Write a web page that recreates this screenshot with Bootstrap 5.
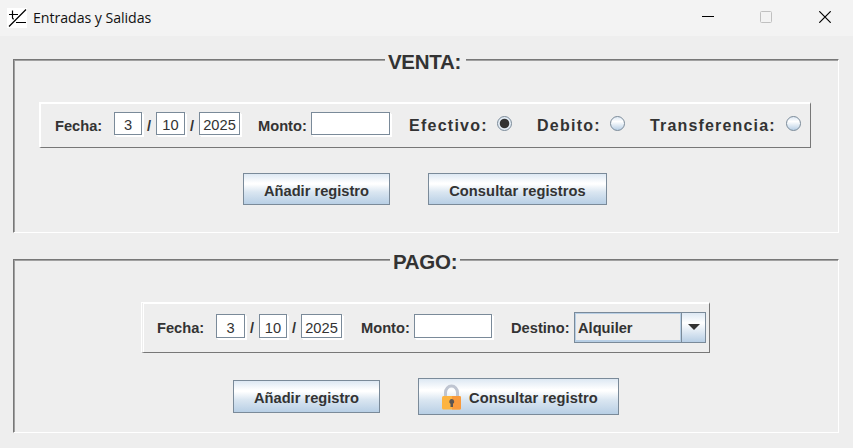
<!DOCTYPE html>
<html lang="es">
<head>
<meta charset="utf-8">
<meta name="viewport" content="width=device-width, initial-scale=1">
<title>Entradas y Salidas</title>
<link href="https://cdn.jsdelivr.net/npm/bootstrap@5.3.0/dist/css/bootstrap.min.css" rel="stylesheet">
<style>
body{background:#eee;color:#333;font:bold 14.67px/20px "Liberation Sans",Arial,sans-serif;height:448px;overflow:hidden}
.titlebar{height:36px;background:#f3f3f3;color:#111;padding:0 22px 0 7px}
.titlebar h1{font:14.2px/20px "Open Sans","Segoe UI",sans-serif;letter-spacing:-.06px;margin:0 0 0 6px;width:120px}
.titlebar svg{display:block;flex:none}
.group{width:826px;height:174px;margin:0 0 26px 13px;border:1px solid #fff;border-top-color:#777;border-left-color:#777;box-shadow:inset 1px 1px 0 #a0a0a0;padding:1px 0 0 1px}
.group>legend{float:none;font-size:20.5px;letter-spacing:-.3px;line-height:24px;height:24px;background:#eee;margin:-11px 0 0;font-weight:bold;white-space:nowrap;padding:0 0 0 3px}
.strip{border:2px solid #fff;border-right:1px solid #777;border-bottom:1px solid #777}
.strip-sale{width:772px;height:46px;margin:28px 0 0 24px}
.strip-pay{width:569px;height:51px;margin:28px 0 0 126px;border-left:3px double #fff}
.lbl{white-space:nowrap;flex:none}
.slash{width:14px;padding-left:5px}
.wide{font-size:16px;letter-spacing:1.25px}
.field{flex:none;height:23px;margin-bottom:5px;padding:3px 0 0;border:1px solid #7a8a99;border-radius:0;background:#fff;box-shadow:1px 1px 0 #fff,2px 2px 0 #fff;font:14.67px/18px "Liberation Sans",Arial,sans-serif;color:#333;text-align:center}
.strip-pay .field{height:24px;margin-bottom:4px}
.dot{flex:none;width:15px;height:15px;margin:0 0 4px;border:1.5px solid #7a8a99;border-radius:50%;appearance:none;background:linear-gradient(#dde8f3 0,#fff 35%,#b8cfe5)}
.dot:checked{background:radial-gradient(circle,#333 0 4.3px,#e4edf6 5.2px)}
.metal{border:1px solid #7a8a99;border-radius:0;background:linear-gradient(#dde8f3 0,#fff 30%,#fff 34%,#dae6f1 60%,#b8cfe5);color:#333;font:bold 14.67px/20px "Liberation Sans",Arial,sans-serif;padding:3px 0 0;height:32px;white-space:nowrap;text-align:center}
.metal:hover{background:linear-gradient(#dde8f3,#fff 34%,#b8cfe5);color:#333}
.combo{flex:none;width:132px;height:31px;margin-bottom:2px;border:1px solid #7a8a99}
.combo-value{width:107px;border:1px solid #b8cfe5;border-bottom-width:2px;padding:2px 0 0 2px}
.combo-arrow{width:24px;border-left:1px solid #7a8a99;background:linear-gradient(#dde8f3,#fff 34%,#b8cfe5)}
</style>
</head>
<body>
<header class="titlebar d-flex align-items-center">
  <svg width="20" height="20" viewBox="0 0 20 20"><path fill="#fff" d="M0 0h20v20H0z"/><path d="M2 18.500 19 1.500M2 6.500h9M5.500 2.500V10q0 1 1.500 1M9 14.500h10" fill="none" stroke="#000" stroke-width="1.2"/></svg>
  <h1 class="text-nowrap">Entradas y Salidas</h1>
  <div class="d-flex ms-auto align-items-center" style="padding-bottom:2px">
    <svg width="12" height="12" style="margin-right:46px"><path d="M0 5.500h12" stroke="#000"/></svg>
    <svg width="12" height="12" style="margin-right:47px"><rect x=".5" y=".5" width="11" height="11" rx="1" fill="none" stroke="#c0c0c0"/></svg>
    <svg width="12" height="12"><path d="M.3.3 11.700 11.700M11.700.3.3 11.700" stroke="#000" stroke-width="1.2"/></svg>
  </div>
</header>
<main style="padding-top:23px">
  <section class="group">
    <legend style="width:81px;margin-left:370px">VENTA:</legend>
    <div class="strip strip-sale d-flex align-items-center">
      <span class="lbl" style="margin-left:14px;width:59px">Fecha:</span>
      <input class="field" value="3" style="width:28px" aria-label="Día">
      <span class="lbl slash">/</span>
      <input class="field" value="10" style="width:29px" aria-label="Mes">
      <span class="lbl slash">/</span>
      <input class="field" value="2025" style="width:41px" aria-label="Año">
      <span class="lbl" style="margin-left:18px;width:53px">Monto:</span>
      <input class="field" style="width:79px" aria-label="Monto">
      <span class="lbl wide" style="margin-left:19px;width:88px">Efectivo:</span><input type="radio" name="medio" class="dot" checked>
      <span class="lbl wide" style="margin-left:25px;width:73px">Debito:</span><input type="radio" name="medio" class="dot">
      <span class="lbl wide" style="margin-left:25px;width:136px;letter-spacing:1.17px">Transferencia:</span><input type="radio" name="medio" class="dot">
    </div>
    <div class="d-flex" style="margin:25px 0 0 228px;gap:38px">
      <button class="btn metal" style="width:147px">Añadir registro</button>
      <button class="btn metal" style="width:179px;letter-spacing:.08px">Consultar registros</button>
    </div>
  </section>
  <section class="group">
    <legend style="width:70px;margin-left:375px">PAGO:</legend>
    <div class="strip strip-pay d-flex align-items-center">
      <span class="lbl" style="margin-left:13px;width:59px">Fecha:</span>
      <input class="field" value="3" style="width:29px" aria-label="Día">
      <span class="lbl slash">/</span>
      <input class="field" value="10" style="width:28px" aria-label="Mes">
      <span class="lbl slash">/</span>
      <input class="field" value="2025" style="width:41px" aria-label="Año">
      <span class="lbl" style="margin-left:19px;width:53px">Monto:</span>
      <input class="field" style="width:78px" aria-label="Monto">
      <span class="lbl" style="margin-left:19px;width:63px">Destino:</span>
      <div class="combo d-flex">
        <div class="combo-value d-flex align-items-center">Alquiler</div>
        <div class="combo-arrow d-flex align-items-center justify-content-center"><svg width="12" height="6"><path d="M0 0h12L6 6z" fill="#333"/></svg></div>
      </div>
    </div>
    <div class="d-flex align-items-center" style="margin:25px 0 0 218px;gap:38px">
      <button class="btn metal" style="width:147px;height:33px">Añadir registro</button>
      <button class="btn metal d-flex align-items-center" style="width:201px;height:37px;padding:1px 0 0 22px;letter-spacing:.1px">
        <svg width="21" height="26" viewBox="0 0 21 26" style="margin-right:7px"><path d="M4.500 13V8.500a6 6.500 0 0 1 12 0V13" fill="none" stroke="#bfc5d1" stroke-width="3"/><rect x="1" y="12" width="19" height="13.500" rx="1.500" fill="#fdb441"/><path d="M11 12h7.500a1.500 1.500 0 0 1 1.500 1.500V24a1.500 1.500 0 0 1-1.500 1.500H11z" fill="#f99a3c"/><path d="M10.700 15a2.600 2.600 0 0 1 1.300 4.800V23H9.500v-3.200A2.600 2.600 0 0 1 10.700 15z" fill="#5c5552"/></svg>
        <span style="padding-top:2px">Consultar registro</span>
      </button>
    </div>
  </section>
</main>
<script src="https://cdn.jsdelivr.net/npm/bootstrap@5.3.0/dist/js/bootstrap.bundle.min.js"></script>
</body>
</html>
